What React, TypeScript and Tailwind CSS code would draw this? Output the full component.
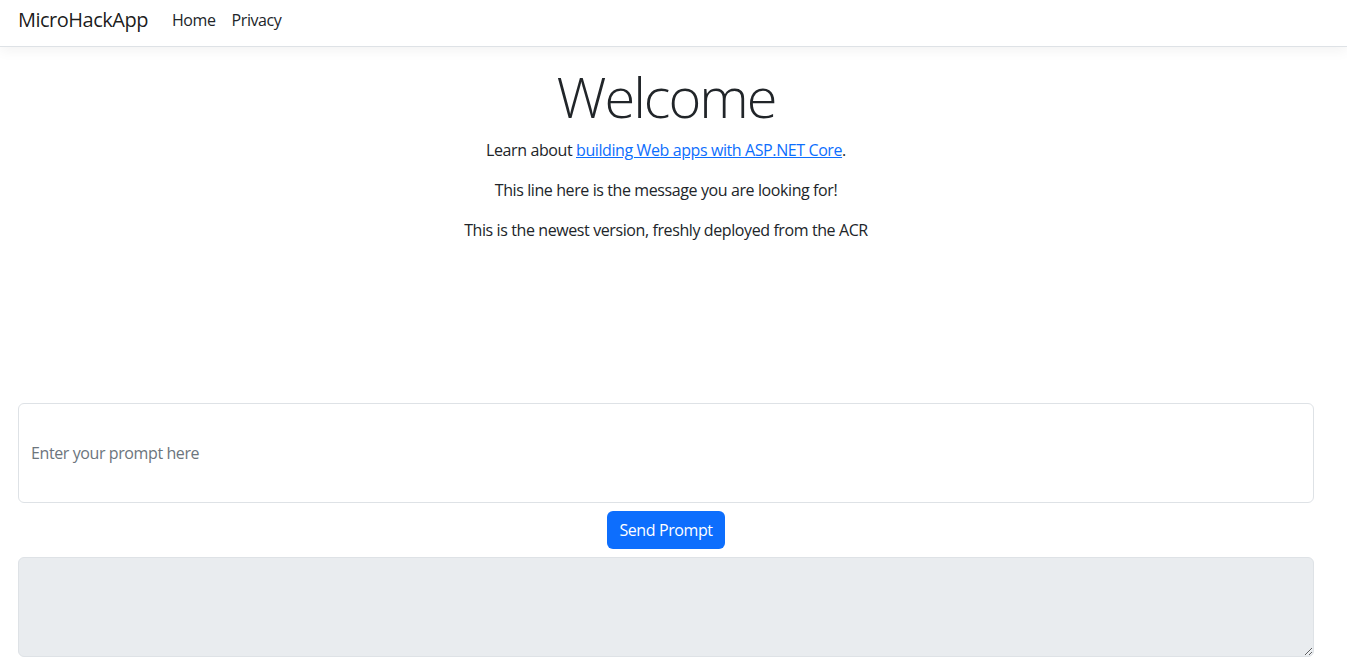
import React from 'react'

const App = () => {
  return (
    <div className="min-h-screen bg-white text-[#212529] text-[16px] leading-6 tracking-[-0.4px] font-['Open_Sans',sans-serif]">
      {/* Navbar */}
      <header className="h-[47px] bg-white border-b border-[#dee2e6] shadow-[0_4px_12px_rgba(0,0,0,0.05)] mb-4">
        <nav className="flex items-center h-[40px] pl-[18px]">
          <a href="#" className="text-[20px] leading-[30px] tracking-[-0.5px] text-[rgba(0,0,0,0.9)] mr-4">
            MicroHackApp
          </a>
          <ul className="flex items-center">
            <li>
              <a href="#" className="block px-2 py-2 text-[#212529]">Home</a>
            </li>
            <li>
              <a href="#" className="block px-2 py-2 text-[#212529]">Privacy</a>
            </li>
          </ul>
        </nav>
      </header>

      {/* Main */}
      <main className="pl-[18px] pr-[33px]">
        <div className="text-center">
          <h1 className="text-[56px] leading-[67px] font-light tracking-[-2px] mb-2">Welcome</h1>
          <p className="mb-4">
            Learn about{' '}
            <a href="#" className="text-[#0d6efd] underline">building Web apps with ASP.NET Core</a>.
          </p>
          <p className="mb-4">This line here is the message you are looking for!</p>
          <p className="mb-4">This is the newest version, freshly deployed from the ACR</p>
        </div>

        <div className="mt-[161px] flex flex-col items-center">
          <textarea
            className="w-full h-[100px] px-3 py-[37px] border border-[#dee2e6] rounded-md resize-none text-[#212529] placeholder:text-[#6c757d] outline-none"
            placeholder="Enter your prompt here"
          />
          <button className="mt-2 h-[38px] px-3 bg-[#0d6efd] text-white rounded-md">
            Send Prompt
          </button>
          <textarea
            readOnly
            className="mt-2 w-full h-[100px] px-3 py-1.5 bg-[#e9ecef] border border-[#dee2e6] rounded-md outline-none"
          />
        </div>
      </main>
    </div>
  )
}

export default App
